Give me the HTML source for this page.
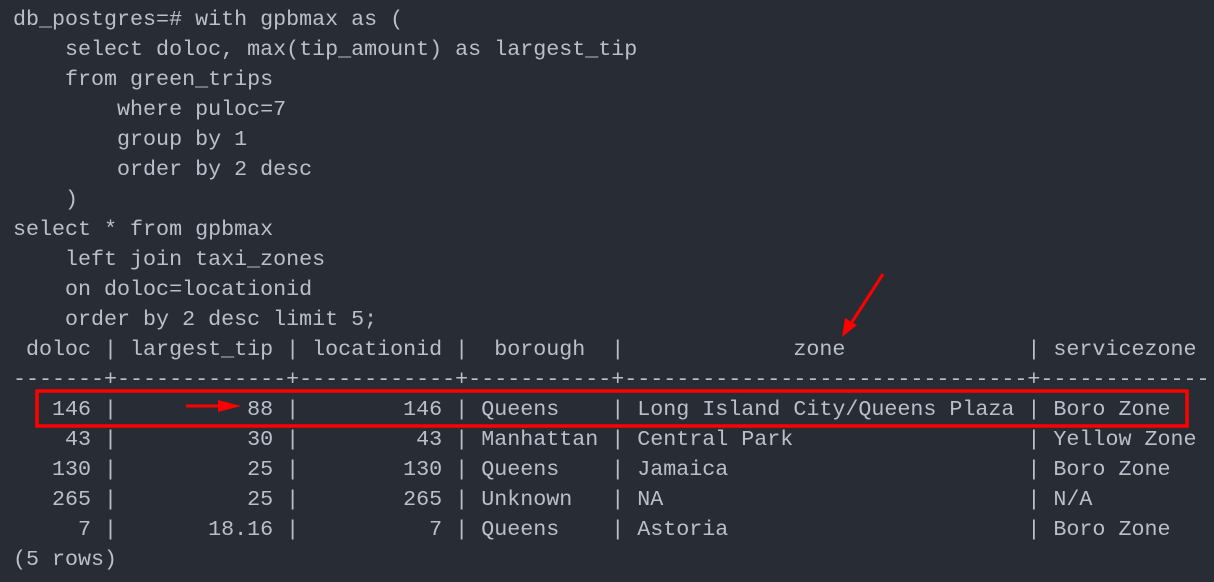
<!DOCTYPE html>
<html><head><style>
html,body{margin:0;padding:0;background:#282c34;width:1214px;height:582px;overflow:hidden}
pre{margin:0;position:absolute;left:13px;top:5px;font-family:"Liberation Mono",monospace;font-size:21.68px;line-height:30px;color:#b9c0cc}
</style></head><body>
<pre>db_postgres=# with gpbmax as (
    select doloc, max(tip_amount) as largest_tip
    from green_trips
        where puloc=7
        group by 1
        order by 2 desc
    )
select * from gpbmax
    left join taxi_zones
    on doloc=locationid
    order by 2 desc limit 5;
 doloc | largest_tip | locationid |  borough  |             zone              | servicezone
-------+-------------+------------+-----------+-------------------------------+-------------
   146 |          88 |        146 | Queens    | Long Island City/Queens Plaza | Boro Zone
    43 |          30 |         43 | Manhattan | Central Park                  | Yellow Zone
   130 |          25 |        130 | Queens    | Jamaica                       | Boro Zone
   265 |          25 |        265 | Unknown   | NA                            | N/A
     7 |       18.16 |          7 | Queens    | Astoria                       | Boro Zone
(5 rows)</pre>
<svg width="1214" height="582" style="position:absolute;left:0;top:0">
<rect x="37" y="391" width="1150" height="35" fill="none" stroke="#f00" stroke-width="3.5"/>
<line x1="186" y1="406" x2="222" y2="406" stroke="#f00" stroke-width="3"/>
<polygon points="218,400 241,406 218,412" fill="#f00"/>
<line x1="883" y1="274" x2="852" y2="322" stroke="#f00" stroke-width="3"/>
<polygon points="845,318 842,337 857,325" fill="#f00"/>
</svg>
</body></html>
